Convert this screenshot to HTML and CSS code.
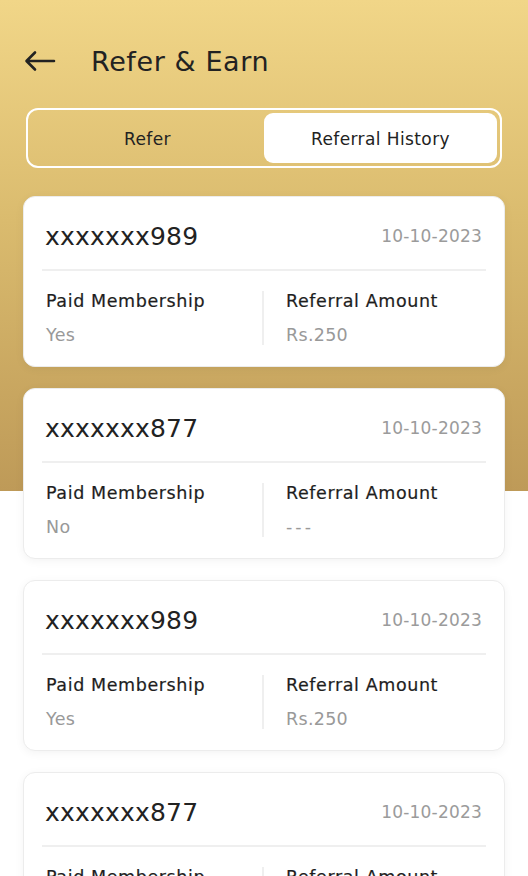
FILE: index.html
```html
<!DOCTYPE html>
<html lang="en">
<head>
  <meta charset="UTF-8"/>
  <meta name="viewport" content="width=device-width, initial-scale=1.0"/>
  <title>Refer &amp; Earn</title>
  <link rel="stylesheet" href="styles.css">
</head>
<body>
  <div class="hero"></div>

  <div class="page">
    <div class="top-bar">
      <svg class="back" width="32" height="22" viewBox="0 0 32 22" fill="none" stroke="#222" stroke-width="2.6" stroke-linecap="round" stroke-linejoin="round">
        <path d="M30 11H3M11 2.5L2.5 11l8.5 8.5"/>
      </svg>
      <h1>Refer &amp; Earn</h1>
    </div>

    <div class="tabs">
      <div class="tab">Refer</div>
      <div class="tab active">Referral History</div>
    </div>

    <!-- referral list -->
    <div class="list">
      <div class="card">
        <div class="card-head">
          <span class="phone">xxxxxxx989</span>
          <span class="date">10-10-2023</span>
        </div>
        <div class="card-body">
          <div class="col">
            <div class="label">Paid Membership</div>
            <div class="value">Yes</div>
          </div>
          <div class="col">
            <div class="label">Referral Amount</div>
            <div class="value">Rs.250</div>
          </div>
        </div>
      </div>

      <div class="card">
        <div class="card-head">
          <span class="phone">xxxxxxx877</span>
          <span class="date">10-10-2023</span>
        </div>
        <div class="card-body">
          <div class="col">
            <div class="label">Paid Membership</div>
            <div class="value">No</div>
          </div>
          <div class="col">
            <div class="label">Referral Amount</div>
            <div class="value empty">---</div>
          </div>
        </div>
      </div>

      <div class="card">
        <div class="card-head">
          <span class="phone">xxxxxxx989</span>
          <span class="date">10-10-2023</span>
        </div>
        <div class="card-body">
          <div class="col">
            <div class="label">Paid Membership</div>
            <div class="value">Yes</div>
          </div>
          <div class="col">
            <div class="label">Referral Amount</div>
            <div class="value">Rs.250</div>
          </div>
        </div>
      </div>

      <div class="card">
        <div class="card-head">
          <span class="phone">xxxxxxx877</span>
          <span class="date">10-10-2023</span>
        </div>
        <div class="card-body">
          <div class="col">
            <div class="label">Paid Membership</div>
            <div class="value">No</div>
          </div>
          <div class="col">
            <div class="label">Referral Amount</div>
            <div class="value empty">---</div>
          </div>
        </div>
      </div>
    </div>
  </div>
</body>
</html>
```

FILE: styles.css
```css
* {
  margin: 0; padding: 0; box-sizing: border-box;
}
html, body {
  height: 100%;
  overflow: hidden;
}
body {
  font-family: "DejaVu Sans", "Noto Sans", sans-serif;
  background: #fff;
  color: #222;
  position: relative;
}
/* golden backdrop behind the header */
.hero {
  position: absolute;
  left: 0; top: 0; right: 0;
  height: 491px;
  background: linear-gradient(to bottom, #F1D688, #DABB6E 45%, #BE9A58);
}
.page {
  position: relative;
  padding: 0 23px;
}
.top-bar {
  display: flex;
  align-items: center;
  height: 122px;
  padding: 0 0 0 1px;
}
.back {
  margin-right: 35px;
}
h1 {
  font-size: 27px;
  font-weight: 400;
  color: #222;
  letter-spacing: 0.6px;
}
.tabs {
  display: flex;
  margin: -14px 3px 0;
  height: 60px;
  padding: 3px;
  border: 2px solid #fff;
  border-radius: 12px;
}
.tab {
  flex: 1;
  display: flex; align-items: center; justify-content: center;
  font-size: 17px;
  letter-spacing: 0.4px;
  color: #222;
  border-radius: 9px;
  padding-top: 2px;
}
.tab.active {
  background: #fff;
}
.list {
  margin-top: 28px;
  display: flex; flex-direction: column;
  gap: 21px;
}
.card {
  background: #fff;
  border: 1px solid #ececec;
  border-radius: 12px;
  box-shadow: 0 2px 10px rgba(0,0,0,0.05);
  padding: 0 18px;
  height: 171px;
}
.card-head {
  display: flex; align-items: center; justify-content: space-between;
  height: 74px;
  padding: 6px 4px 0 3px;
  border-bottom: 2px solid #efefef;
}
.phone {
  font-size: 25px;
  color: #222;
  letter-spacing: 0.2px;
}
.date {
  font-size: 17px;
  color: #9b9b9b;
  letter-spacing: 0.2px;
}
.card-body {
  display: grid;
  grid-template-columns: 1fr 1fr;
  padding-top: 20px;
}
.col {
  padding: 0 4px;
}
.col:first-child {
  border-right: 2px solid #efefef;
}
.col:last-child {
  padding-left: 22px;
}
.label {
  font-size: 17.5px;
  color: #1e1e1e;
  line-height: 20px;
  letter-spacing: 0.6px;
  -webkit-text-stroke: 0.2px #1e1e1e;
}
.value {
  margin-top: 14px;
  font-size: 17.5px;
  color: #999;
  line-height: 20px;
  letter-spacing: 0.3px;
}
.value.empty {
  letter-spacing: 3px;
}
```
